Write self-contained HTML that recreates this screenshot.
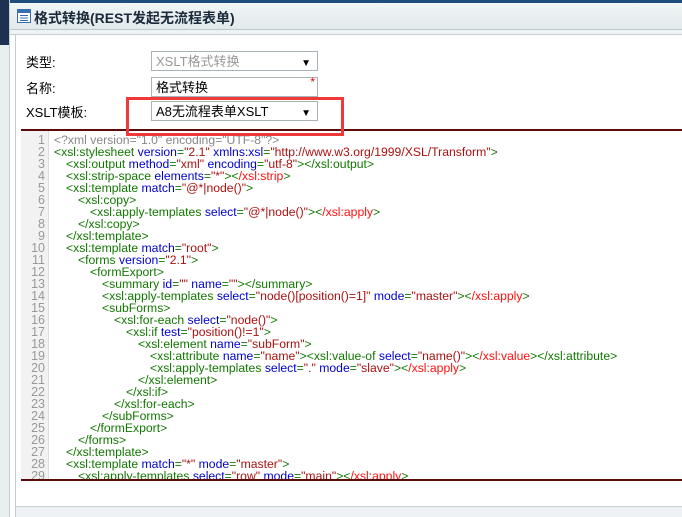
<!DOCTYPE html>
<html><head><meta charset="utf-8"><style>
*{margin:0;padding:0;box-sizing:border-box}
body{width:682px;height:517px;overflow:hidden;background:#fff;font-family:"Liberation Sans","Noto Sans CJK SC",sans-serif;position:relative}
.abs{position:absolute}
#left{left:0;top:0;width:10px;height:517px;background:#e9eef0}
#title{left:10px;top:0;width:672px;height:35px;background:linear-gradient(#1e4f7a 0,#1e4f7a 3px,#f0f5f6 3px,#e3eaeb 29px,#bcc9cc 29px,#bcc9cc 30px,#eef3f4 30px,#eef3f4 34px,#c2d0d4 34px)}
#title span{position:absolute;left:24px;top:8px;font-size:14px;font-weight:bold;color:#1a2a3a}
.lbl{font-size:13px;color:#000;left:26px}
.inp{left:151px;width:167px;height:20px;border:1px solid #a9b3b8;background:#fff;font-size:13px;padding:2px 4px;line-height:15px}
.arr{position:absolute;right:6px;top:4px;font-size:10px;color:#000}
#code{left:21px;top:129px;width:661px;height:352px;border-top:2px solid #5c0b0b;border-bottom:2px solid #5c0b0b;background:#fff;overflow:hidden}
#gut{position:absolute;left:0;top:0;width:28px;height:100%;background:#f2f2f2;border-right:1px solid #ddd}
.ln{position:absolute;left:0;width:24px;text-align:right;color:#999;font-size:12.5px;line-height:12px}
.cl{position:absolute;white-space:pre;font-size:12.2px;line-height:12px;color:#170}
.a{color:#00c}.s{color:#a11}.r{color:#f11}
</style></head><body>
<div class="abs" id="left"><div class="abs" style="left:0;top:0;width:10px;height:45px;background:#1d3250"></div></div>
<div class="abs" style="left:9px;top:0;width:1px;height:517px;background:#c2d0d4"></div>
<div class="abs" style="left:15px;top:35px;width:1px;height:482px;background:#c2d0d4"></div>
<div class="abs" id="title"><svg style="position:absolute;left:7px;top:9px" width="14" height="14"><rect x="0.5" y="0.5" width="13" height="13" fill="#fff" stroke="#3a6fb0"/><rect x="1" y="1" width="12" height="3" fill="#3a6fb0"/><path d="M3 6.5h8M3 9h8M3 11.5h8" stroke="#3a6fb0"/></svg><span>格式转换(REST发起无流程表单)</span></div>
<div class="abs lbl" style="top:52px">类型:</div>
<div class="abs lbl" style="top:78px">名称:</div>
<div class="abs lbl" style="top:102px">XSLT模板:</div>
<div class="abs inp" style="top:51px;color:#999">XSLT格式转换<span class="arr">▼</span></div>
<div class="abs inp" style="top:77px">格式转换<span style="position:absolute;right:2px;top:-3px;color:#e00;font-size:12px">*</span></div>
<div class="abs inp" style="top:101px">A8无流程表单XSLT<span class="arr">▼</span></div>
<div class="abs" id="code"><div id="gut"></div><div id="lines"></div></div>
<div class="abs" style="left:126px;top:97px;width:218px;height:39px;border:3px solid #f03a3a;z-index:5"></div>
<div class="abs" style="left:16px;top:506px;width:666px;height:11px;background:#eef2f4;border-top:1px solid #c2d0d4"></div>
<script>
var L=[
[0,'<span style="color:#888">&lt;?xml version="1.0" encoding="UTF-8"?&gt;</span>'],
[0,'&lt;xsl:stylesheet <span class="a">version</span>=<span class="s">"2.1"</span> <span class="a">xmlns:xsl</span>=<span class="s">"http://www.w3.org/1999/XSL/Transform"</span>&gt;'],
[1,'&lt;xsl:output <span class="a">method</span>=<span class="s">"xml"</span> <span class="a">encoding</span>=<span class="s">"utf-8"</span>&gt;&lt;/xsl:output&gt;'],
[1,'&lt;xsl:strip-space <span class="a">elements</span>=<span class="s">"*"</span>&gt;&lt;<span class="r">/xsl:strip</span>&gt;'],
[1,'&lt;xsl:template <span class="a">match</span>=<span class="s">"@*|node()"</span>&gt;'],
[2,'&lt;xsl:copy&gt;'],
[3,'&lt;xsl:apply-templates <span class="a">select</span>=<span class="s">"@*|node()"</span>&gt;&lt;<span class="r">/xsl:apply</span>&gt;'],
[2,'&lt;/xsl:copy&gt;'],
[1,'&lt;/xsl:template&gt;'],
[1,'&lt;xsl:template <span class="a">match</span>=<span class="s">"root"</span>&gt;'],
[2,'&lt;forms <span class="a">version</span>=<span class="s">"2.1"</span>&gt;'],
[3,'&lt;formExport&gt;'],
[4,'&lt;summary <span class="a">id</span>=<span class="s">""</span> <span class="a">name</span>=<span class="s">""</span>&gt;&lt;/summary&gt;'],
[4,'&lt;xsl:apply-templates <span class="a">select</span>=<span class="s">"node()[position()=1]"</span> <span class="a">mode</span>=<span class="s">"master"</span>&gt;&lt;<span class="r">/xsl:apply</span>&gt;'],
[4,'&lt;subForms&gt;'],
[5,'&lt;xsl:for-each <span class="a">select</span>=<span class="s">"node()"</span>&gt;'],
[6,'&lt;xsl:if <span class="a">test</span>=<span class="s">"position()!=1"</span>&gt;'],
[7,'&lt;xsl:element <span class="a">name</span>=<span class="s">"subForm"</span>&gt;'],
[8,'&lt;xsl:attribute <span class="a">name</span>=<span class="s">"name"</span>&gt;&lt;xsl:value-of <span class="a">select</span>=<span class="s">"name()"</span>&gt;&lt;<span class="r">/xsl:value</span>&gt;&lt;/xsl:attribute&gt;'],
[8,'&lt;xsl:apply-templates <span class="a">select</span>=<span class="s">"."</span> <span class="a">mode</span>=<span class="s">"slave"</span>&gt;&lt;<span class="r">/xsl:apply</span>&gt;'],
[7,'&lt;/xsl:element&gt;'],
[6,'&lt;/xsl:if&gt;'],
[5,'&lt;/xsl:for-each&gt;'],
[4,'&lt;/subForms&gt;'],
[3,'&lt;/formExport&gt;'],
[2,'&lt;/forms&gt;'],
[1,'&lt;/xsl:template&gt;'],
[1,'&lt;xsl:template <span class="a">match</span>=<span class="s">"*"</span> <span class="a">mode</span>=<span class="s">"master"</span>&gt;'],
[2,'&lt;xsl:apply-templates <span class="a">select</span>=<span class="s">"row"</span> <span class="a">mode</span>=<span class="s">"main"</span>&gt;&lt;<span class="r">/xsl:apply</span>&gt;']
];
var h='';
for(var i=0;i<L.length;i++){var t=3+i*12;
h+='<div class="ln" style="top:'+t+'px">'+(i+1)+'</div><div class="cl" style="top:'+t+'px;left:'+(33+L[i][0]*12)+'px">'+L[i][1]+'</div>';}
document.getElementById('lines').innerHTML=h;
</script>
</body></html>
